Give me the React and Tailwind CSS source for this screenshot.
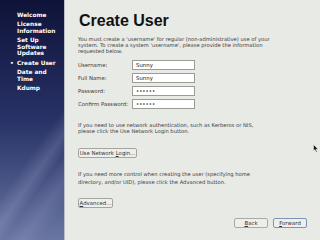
import React from "react";

const sideItems = [
  { lines: ["Welcome"] },
  { lines: ["License", "Information"] },
  { lines: ["Set Up", "Software", "Updates"] },
  { lines: ["Create User"], active: true },
  { lines: ["Date and", "Time"] },
  { lines: ["Kdump"] },
];

function Field({ label, value }) {
  return (
    <div className="flex items-center h-[10px]">
      <div className="w-[54px] text-[5.4px] leading-[10px] text-[#3a3a3a] whitespace-nowrap">{label}</div>
      <div className="w-[63px] h-[10px] bg-white border border-[#9a9c98] pl-[3px] text-[5.4px] leading-[8px] text-[#222]">{value}</div>
    </div>
  );
}

function Btn({ children, className = "" }) {
  return (
    <div className={"h-[10px] rounded-[2px] border bg-[#eeefec] flex items-center justify-center text-[5.4px] text-[#333] whitespace-nowrap " + className}>
      <span>{children}</span>
    </div>
  );
}

export default function App() {
  return (
    <div className="relative w-[320px] h-[240px] flex overflow-hidden" style={{ fontFamily: '"DejaVu Sans", sans-serif' }}>
      <div className="relative w-[64px] h-full bg-gradient-to-b from-[#0f1339] via-[#283266] to-[#6a76a2] pt-[11.5px] flex flex-col gap-[2.6px] overflow-hidden">
        <div className="absolute inset-0 bg-[linear-gradient(125deg,transparent_60%,rgba(200,200,230,0.18)_68%,transparent_74%,rgba(200,200,230,0.12)_82%,transparent_90%)]" />
        {sideItems.map((it, i) => (
          <div key={i} className="relative pl-[17px] text-white font-bold text-[5.8px] leading-[6.7px]">
            {it.active && <span className="absolute left-[10px] top-0">•</span>}
            {it.lines.map((l, j) => (
              <div key={j} className="whitespace-nowrap">{l}</div>
            ))}
          </div>
        ))}
      </div>
      <div className="w-[1px] h-full bg-[#b9bdc4]" />
      <div className="flex-1 bg-[#e8eae6] pl-[13px] pr-[13px] pt-[12px] flex flex-col text-[#3c3c3c]">
        <div className="text-[16px] leading-[18px] font-bold text-[#111] pl-[1px]" style={{ fontFamily: '"Liberation Sans", sans-serif' }}>Create User</div>
        <div className="mt-[6px] text-[5.2px] leading-[6.2px] whitespace-nowrap">
          <div>You must create a 'username' for regular (non-administrative) use of your</div>
          <div>system.  To create a system 'username', please provide the information</div>
          <div>requested below.</div>
        </div>
        <div className="mt-[5px] flex flex-col gap-[3px]">
          <Field label="Username:" value="Sunny" />
          <Field label="Full Name:" value="Sunny" />
          <Field label="Password:" value="••••••" />
          <Field label="Confirm Password:" value="••••••" />
        </div>
        <div className="mt-[13px] text-[5.2px] leading-[6.7px] whitespace-nowrap">
          <div>If you need to use network authentication, such as Kerberos or NIS,</div>
          <div>please click the Use Network Login button.</div>
        </div>
        <div className="mt-[13px] flex">
          <Btn className="w-[59px] border-[#a3a5a1]">Use Network <span className="underline">L</span>ogin...</Btn>
        </div>
        <div className="mt-[13px] text-[5.2px] leading-[7.7px] whitespace-nowrap">
          <div>If you need more control when creating the user (specifying home</div>
          <div>directory, and/or UID), please click the Advanced button.</div>
        </div>
        <div className="mt-[12px] flex">
          <Btn className="w-[35px] border-[#a3a5a1]"><span className="underline">A</span>dvanced...</Btn>
        </div>
        <div className="mt-[10px] flex justify-end gap-[5px]">
          <Btn className="w-[34px] border-[#a8aaa6]"><span className="underline">B</span>ack</Btn>
          <Btn className="w-[34px] border-[#7f93b8]"><span className="underline">F</span>orward</Btn>
        </div>
      </div>
      <svg className="absolute left-[313px] top-[144px]" width="6" height="9" viewBox="0 0 6 9">
        <path d="M0.5 0.5 L0.5 7 L2 5.6 L3.2 8.3 L4.2 7.9 L3 5.3 L5 5.3 Z" fill="#111" stroke="#fff" strokeWidth="0.5" />
      </svg>
    </div>
  );
}
